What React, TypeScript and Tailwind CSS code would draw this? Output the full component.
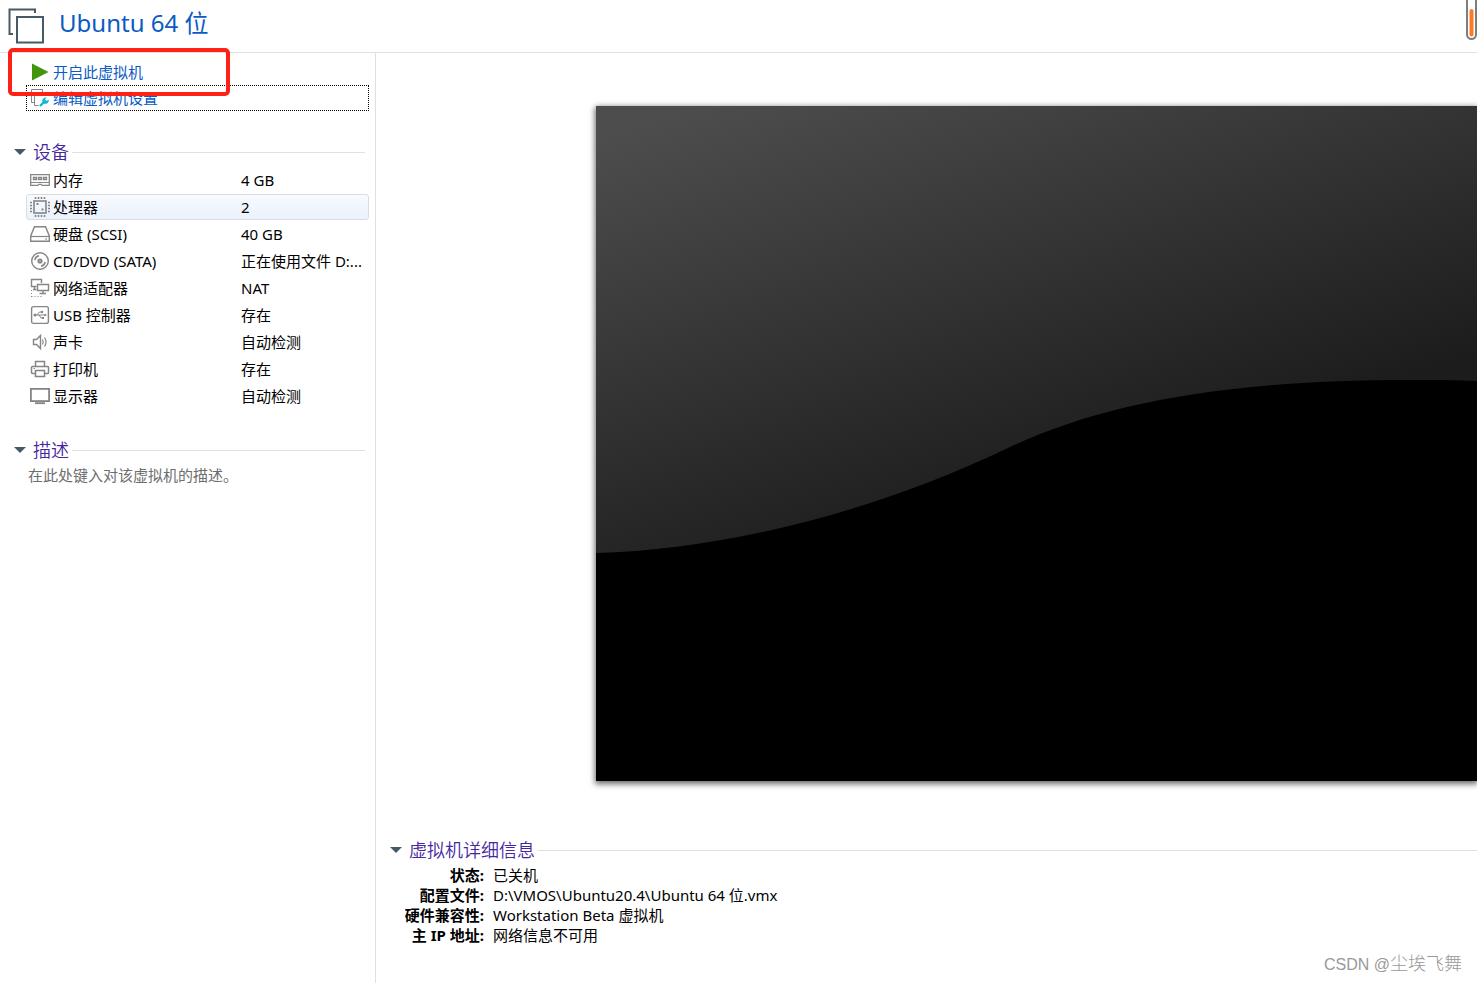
import type { ReactNode } from "react";

interface Device {
  id: string;
  name: string;
  value: string;
  icon: ReactNode;
}

const MemoryIcon = () => (
  <svg width="20" height="20" viewBox="0 0 20 20" fill="none" stroke="#858585" strokeWidth="1.3">
    <path d="M0.7 4.6H19.3V15.4H12L11 14.4H9L8 15.4H0.7Z" />
    <path d="M1 12.5H19" strokeWidth="1" />
    <path d="M3.5 7.5H6.5V9.5H3.5ZM8.5 7.5H11.5V9.5H8.5ZM13.5 7.5H16.5V9.5H13.5Z" />
  </svg>
);

const CpuIcon = () => (
  <svg width="20" height="20" viewBox="0 0 20 20" fill="none" stroke="#858585">
    <rect x="4" y="4" width="12" height="12" strokeWidth="1.6" />
    <path
      d="M5.5 0V2M8.5 0V2M11.5 0V2M14.5 0V2M5.5 18V20M8.5 18V20M11.5 18V20M14.5 18V20M0 5.5H2M0 8.5H2M0 11.5H2M0 14.5H2M18 5.5H20M18 8.5H20M18 11.5H20M18 14.5H20"
      strokeWidth="1.6"
    />
    <path d="M6.5 7H8.5M11.5 12.5H13.5" strokeWidth="2" />
  </svg>
);

const DiskIcon = () => (
  <svg width="20" height="20" viewBox="0 0 20 20" fill="none" stroke="#858585">
    <path d="M4.5 2.7H15.5L19.3 12V17.3H0.7V12Z" strokeWidth="1.4" />
    <path d="M1 12.5H19" strokeWidth="1.2" />
    <path d="M15 15H17" strokeWidth="1.2" />
  </svg>
);

const DiscIcon = () => (
  <svg width="20" height="20" viewBox="0 0 20 20" fill="none" stroke="#858585">
    <circle cx="10" cy="10" r="8.3" strokeWidth="1.4" />
    <circle cx="10" cy="10" r="1.6" strokeWidth="2" />
    <path d="M4.8 9A5.4 5.4 0 0 1 9 4.8M15.2 11A5.4 5.4 0 0 1 11 15.2" strokeWidth="1.5" />
  </svg>
);

const NetworkIcon = () => (
  <svg width="20" height="20" viewBox="0 0 20 20" fill="none" stroke="#858585">
    <path d="M6.5 8.5H1.5V1.5H11.5V5M4.5 8.5V11M3 11.5H6.5" strokeWidth="1.4" />
    <path d="M7.5 6.5H18.5V12.5H7.5ZM13 13V15M9.5 15.5H16" strokeWidth="1.4" />
    <path d="M1.5 12V19M1.5 18.5H13" strokeDasharray="1 2" />
  </svg>
);

const UsbIcon = () => (
  <svg width="20" height="20" viewBox="0 0 20 20" fill="none" stroke="#858585">
    <rect x="1.6" y="1.6" width="16.8" height="16.8" rx="2" strokeWidth="1.4" />
    <path d="M5 10H16M7 10L9.5 7H11.5M9 10L11 13H13" />
    <circle cx="5" cy="10" r="1.5" fill="#858585" stroke="none" />
    <circle cx="12" cy="7" r="1.2" fill="#858585" stroke="none" />
    <path d="M12 12H14V14H12ZM14.5 8.5L17 10L14.5 11.5Z" fill="#858585" stroke="none" />
  </svg>
);

const SoundIcon = () => (
  <svg width="20" height="20" viewBox="0 0 20 20" fill="none" stroke="#858585">
    <path d="M3.5 7.5H6.5L10.5 3.5V16.5L6.5 12.5H3.5Z" strokeWidth="1.4" />
    <path d="M12.5 7.5Q14 10 12.5 12.5M14.5 5.5Q17.5 10 14.5 14.5" strokeWidth="1.2" />
  </svg>
);

const PrinterIcon = () => (
  <svg width="20" height="20" viewBox="0 0 20 20" fill="none" stroke="#858585" strokeWidth="1.5">
    <path d="M5.5 7V2.5H14.5V7M5.5 14.5H2.5Q1.5 14.5 1.5 13.5V8.5Q1.5 7.5 2.5 7.5H17.5Q18.5 7.5 18.5 8.5V13.5Q18.5 14.5 17.5 14.5H14.5" />
    <path d="M5.5 11.5H14.5V17.5H5.5Z" />
    <path d="M3.5 9.5H5" strokeWidth="1" />
  </svg>
);

const DisplayIcon = () => (
  <svg width="20" height="20" viewBox="0 0 20 20" fill="none" stroke="#858585">
    <rect x="0.9" y="2.9" width="18.2" height="12.2" strokeWidth="1.8" />
    <path d="M5 17.2H15" strokeWidth="1.8" />
  </svg>
);

const devices: Device[] = [
  { id: "memory", name: "内存", value: "4 GB", icon: <MemoryIcon /> },
  { id: "cpu", name: "处理器", value: "2", icon: <CpuIcon /> },
  { id: "disk", name: "硬盘 (SCSI)", value: "40 GB", icon: <DiskIcon /> },
  { id: "cd", name: "CD/DVD (SATA)", value: "正在使用文件 D:...", icon: <DiscIcon /> },
  { id: "network", name: "网络适配器", value: "NAT", icon: <NetworkIcon /> },
  { id: "usb", name: "USB 控制器", value: "存在", icon: <UsbIcon /> },
  { id: "sound", name: "声卡", value: "自动检测", icon: <SoundIcon /> },
  { id: "printer", name: "打印机", value: "存在", icon: <PrinterIcon /> },
  { id: "display", name: "显示器", value: "自动检测", icon: <DisplayIcon /> },
];

const details = [
  { label: "状态:", value: "已关机" },
  { label: "配置文件:", value: "D:\\VMOS\\Ubuntu20.4\\Ubuntu 64 位.vmx" },
  { label: "硬件兼容性:", value: "Workstation Beta 虚拟机" },
  { label: "主 IP 地址:", value: "网络信息不可用" },
];

function SectionHeader({ title }: { title: string }) {
  return (
    <h2 className="flex h-[26px] items-center">
      <button type="button" className="flex items-center gap-[7px] text-lg font-[350] text-[#4527a0]">
        <svg width="12" height="6" viewBox="0 0 12 6">
          <path d="M0 0H12L6 6Z" fill="#465a66" />
        </svg>
        {title}
      </button>
      <span className="ml-[3px] h-px flex-1 bg-[#e0e0e0]" />
    </h2>
  );
}

function DeviceRow({ device, selected }: { device: Device; selected: boolean }) {
  return (
    <li>
      <button
        type="button"
        className={
          selected
            ? "flex h-[26px] w-full items-center rounded-[3px] border border-[#d9dde3] bg-linear-to-b from-[#f8fafe] to-[#ebf2fc] px-[3px] text-left"
            : "flex h-[26px] w-full items-center rounded-[3px] border border-transparent px-[3px] text-left"
        }
      >
        {device.icon}
        <span className="ml-[3px] w-[188px]">{device.name}</span>
        <span className="whitespace-nowrap">{device.value}</span>
      </button>
    </li>
  );
}

function Sidebar() {
  return (
    <aside className="w-[376px] shrink-0 border-r border-[#e0e0e0] pt-[6px]">
      <div className="relative ml-[26px] mr-[6px] flex flex-col">
        <button type="button" className="flex h-[26px] items-center px-1 text-[#0a5bc4]">
          <svg width="20" height="20" viewBox="0 0 20 20">
            <path d="M2 1.5L18.5 10L2 18.5Z" fill="#43940f" />
          </svg>
          <span className="ml-[3px]">开启此虚拟机</span>
        </button>
        <button
          type="button"
          className="flex h-[26px] items-center border border-dotted border-black px-[3px] text-[#0a5bc4]"
        >
          <svg width="20" height="20" viewBox="0 0 20 20" fill="none">
            <path d="M4 14.5H1.5V1.5H12.5V4" stroke="#858585" />
            <path d="M8.5 17.5H4.5V4.5H14.5V8" stroke="#858585" />
            <path d="M10 18L15 13" stroke="#12b4d8" strokeWidth="2.4" />
            <path d="M18.5 11.4L16.6 13L15 11.6L16.6 9.6A3.2 3.2 0 1 0 18.5 11.4Z" fill="#12b4d8" />
          </svg>
          <span className="ml-[3px]">编辑虚拟机设置</span>
        </button>
        <div className="pointer-events-none absolute -left-[18px] -top-[11px] h-12 w-[222px] rounded-[5px] border-4 border-[#ff2116]" />
      </div>

      <section className="mt-7 pl-[14px] pr-[10px]">
        <SectionHeader title="设备" />
      </section>
      <ul className="ml-[26px] mr-[6px] mt-[2px] flex flex-col gap-px">
        {devices.map((device) => (
          <DeviceRow key={device.id} device={device} selected={device.id === "cpu"} />
        ))}
      </ul>

      <section className="mt-7 pl-[14px] pr-[10px]">
        <SectionHeader title="描述" />
        <p className="pl-[14px] leading-6 text-[#6e6e6e]">在此处键入对该虚拟机的描述。</p>
      </section>
    </aside>
  );
}

function Preview() {
  return (
    <div className="ml-[220px] mt-[53px] h-[675px] bg-black shadow-[0_2px_6px_1px_rgba(0,0,0,0.6)]">
      <svg className="h-full w-full" viewBox="0 0 881 675" preserveAspectRatio="xMinYMin slice">
        <defs>
          <linearGradient id="screen" gradientUnits="userSpaceOnUse" x1="100" y1="0" x2="255" y2="460">
            <stop offset="0" stopColor="#4d4d4d" />
            <stop offset="1" stopColor="#1c1c1c" />
          </linearGradient>
        </defs>
        <path
          d="M0 0H881V275C860 274 840 274 814 274C620 274 500 300 412 342C270 410 120 444 0 447Z"
          fill="url(#screen)"
        />
      </svg>
    </div>
  );
}

export default function App() {
  return (
    <div className="relative flex min-h-screen flex-col overflow-hidden bg-white font-['Noto_Sans','Noto_Sans_CJK_SC',sans-serif] text-[15px] leading-5 text-black">
      <header className="flex h-[53px] items-start border-b border-[#e0e0e0] pl-2">
        <svg className="mt-2" width="36" height="36" viewBox="0 0 36 36" fill="none" stroke="#465a66" strokeWidth="2">
          <path d="M5 26H1.5V1.5H27V5" />
          <rect x="9" y="9" width="26" height="25.5" />
        </svg>
        <h1 className="ml-[15px] mt-[7px] flex-1 text-2xl text-[#0a5bc4]">Ubuntu 64 位</h1>
        <svg width="11" height="40" viewBox="0 0 11 40" fill="none">
          <path d="M1 0V34.5A4.5 4.5 0 0 0 10 34.5V0" stroke="#7d7d7d" strokeWidth="2" />
          <path d="M5.5 11V34.5" stroke="#ff7a22" strokeWidth="4" strokeLinecap="round" />
        </svg>
      </header>

      <div className="flex flex-1">
        <Sidebar />
        <main className="min-w-0 flex-1">
          <Preview />
          <section className="mt-14">
            <div className="pl-[14px]">
              <SectionHeader title="虚拟机详细信息" />
            </div>
            <dl className="mt-[2px] grid grid-cols-[108px_1fr] gap-x-[9px]">
              {details.map((item) => (
                <div key={item.label} className="contents">
                  <dt className="text-right font-bold">{item.label}</dt>
                  <dd>{item.value}</dd>
                </div>
              ))}
            </dl>
          </section>
        </main>
      </div>

      <div className="absolute bottom-2 right-[15px] font-['Liberation_Sans','Noto_Sans_CJK_SC',sans-serif] text-base leading-5 text-[#999]">
        CSDN @<span className="text-lg leading-5 font-light">尘埃飞舞</span>
      </div>
    </div>
  );
}
